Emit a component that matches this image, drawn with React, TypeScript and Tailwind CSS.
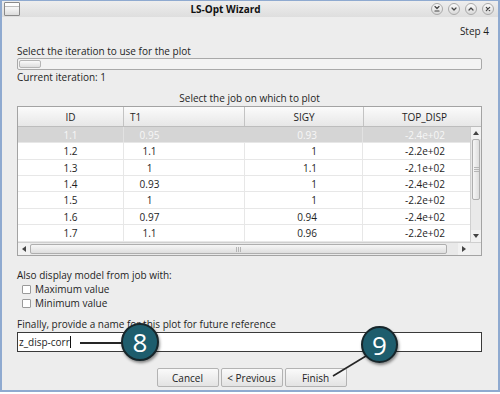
import React from "react";

type Row = { id: string; t1: string; sigy: string; top: string; h: string; sel?: boolean };

const rows: Row[] = [
  { id: "1.1", t1: "0.95", sigy: "0.93", top: "-2.4e+02", h: "h-[16px]", sel: true },
  { id: "1.2", t1: "1.1", sigy: "1", top: "-2.2e+02", h: "h-[17px]" },
  { id: "1.3", t1: "1", sigy: "1.1", top: "-2.1e+02", h: "h-[16px]" },
  { id: "1.4", t1: "0.93", sigy: "1", top: "-2.4e+02", h: "h-[16px]" },
  { id: "1.5", t1: "1", sigy: "1", top: "-2.2e+02", h: "h-[17px]" },
  { id: "1.6", t1: "0.97", sigy: "0.94", top: "-2.4e+02", h: "h-[16px]" },
  { id: "1.7", t1: "1.1", sigy: "0.96", top: "-2.2e+02", h: "h-[17px]" },
];

function TitleBtn({ kind }: { kind: "min" | "down" | "up" | "close" }) {
  return (
    <div className="w-[12px] h-[12px] rounded-full border border-[#a9a9a9] bg-gradient-to-b from-[#fbfbfb] to-[#d9d9d9] flex items-center justify-center">
      <svg width="8" height="8" viewBox="0 0 8 8" fill="none" stroke="#444" strokeWidth="1.2" strokeLinecap="round" strokeLinejoin="round">
        {kind === "min" && (
          <>
            <path d="M2 1.5 L4 3.5 L6 1.5" />
            <path d="M2 6 H6" />
          </>
        )}
        {kind === "down" && <path d="M2 3 L4 5 L6 3" />}
        {kind === "up" && <path d="M2 5 L4 3 L6 5" />}
        {kind === "close" && <path d="M2.3 2.3 L5.7 5.7 M5.7 2.3 L2.3 5.7" />}
      </svg>
    </div>
  );
}

function Checkbox({ label }: { label: string }) {
  return (
    <div className="h-[14px] flex items-center pl-[5px]">
      <div className="w-[9px] h-[9px] border border-[#9a9a9a] bg-white rounded-[1px]" />
      <span className="ml-[4px]">{label}</span>
    </div>
  );
}

function Button({ children }: { children: React.ReactNode }) {
  return (
    <div className="w-[62px] h-[19px] rounded-[2px] border border-[#b3b3b3] bg-gradient-to-b from-[#fafafa] to-[#e3e3e3] flex items-center justify-center text-[#222]">
      {children}
    </div>
  );
}

export default function App() {
  return (
    <div className="w-[500px] h-[394px] relative overflow-hidden bg-white font-['Open_Sans',sans-serif] text-[10px] leading-[14px] text-[#1e1e1e]">
      <div className="w-[500px] h-[392px] bg-[#ededed] border-t border-x-2 border-b-2 border-[#8faad0] flex flex-col">
        {/* Title bar */}
        <div className="h-[16px] flex items-center bg-gradient-to-b from-[#eeeeee] to-[#dedede]">
          <div className="ml-[2px] w-[16px] h-[14px] border border-[#8a8a8a] bg-gradient-to-b from-[#ffffff] via-[#f2f2f2] to-[#dcdcdc] rounded-[1px] flex flex-col">
            <div className="h-[4px] bg-[#fdfdfd] border-b border-[#bdbdbd]" />
          </div>
          <div className="flex-1 text-center font-bold text-[#111]">LS-Opt Wizard</div>
          <div className="flex items-center gap-[5px] mr-[4px]">
            <TitleBtn kind="min" />
            <TitleBtn kind="down" />
            <TitleBtn kind="up" />
            <TitleBtn kind="close" />
          </div>
        </div>

        {/* Body */}
        <div className="flex flex-col pl-[15px] pr-[16px]">
          <div className="mt-[7px] text-right mr-[-7px]">Step 4</div>
          <div className="mt-[6px]">Select the iteration to use for the plot</div>
          <div className="h-[12px] rounded-[2px] border border-[#a9a9a9] bg-[#f3f3f3] flex items-stretch p-[1px]">
            <div className="w-[22px] rounded-[2px] border border-[#b5b5b5] bg-gradient-to-b from-[#fafafa] to-[#dedede]" />
          </div>
          <div>Current iteration: 1</div>
          <div className="mt-[7px] text-center">Select the job on which to plot</div>

          {/* Table */}
          <div className="mt-[1px] h-[150px] border border-[#a3a3a3] bg-white flex flex-col">
            <div className="h-[20px] flex border-b border-[#bdbdbd] bg-gradient-to-b from-[#fbfbfb] to-[#e7e7e7]">
              <div className="w-[106px] border-r border-[#c3c3c3] flex items-center justify-center">ID</div>
              <div className="w-[121px] border-r border-[#c3c3c3] flex items-center pl-[6px]">T1</div>
              <div className="w-[119px] border-r border-[#c3c3c3] flex items-center justify-center">SIGY</div>
              <div className="flex-1 flex items-center justify-center pl-[4px]">TOP_DISP</div>
            </div>
            <div className="flex h-[115px]">
              <div className="flex-1 flex flex-col">
                {rows.map((r) => (
                  <div
                    key={r.id}
                    className={`${r.h} flex items-center border-b border-[#e7e7e7] ${
                      r.sel ? "bg-[#d5d5d5] text-[#f7f7f7]" : "bg-white text-[#1e1e1e]"
                    }`}
                  >
                    <div className={`w-[106px] h-full flex items-center justify-center border-r ${r.sel ? "border-[#e2e2e2]" : "border-[#e7e7e7]"}`}>{r.id}</div>
                    <div className={`w-[121px] h-full flex items-center justify-center pr-[69px] border-r ${r.sel ? "border-[#d5d5d5]" : "border-[#e7e7e7]"}`}>{r.t1}</div>
                    <div className={`w-[118px] h-full flex items-center justify-end pr-[45px] border-r ${r.sel ? "border-[#e2e2e2]" : "border-[#e7e7e7]"}`}>{r.sigy}</div>
                    <div className="flex-1 h-full flex items-center justify-center pl-[17px]">{r.top}</div>
                  </div>
                ))}
              </div>
              {/* vertical scrollbar */}
              <div className="w-[11px] flex flex-col bg-[#e9e9e9] border-l border-[#cfcfcf]">
                <div className="h-[12px] flex items-center justify-center bg-[#f2f2f2]">
                  <svg width="6" height="4" viewBox="0 0 6 4"><path d="M0 4 L3 0 L6 4 Z" fill="#444" /></svg>
                </div>
                <div className="h-[61px] mx-[1px] rounded-[2px] border border-[#aeaeae] bg-gradient-to-r from-[#f6f6f6] to-[#dedede] flex flex-col items-center justify-center gap-[1px]">
                  <div className="w-[5px] h-px bg-[#b5b5b5]" />
                  <div className="w-[5px] h-px bg-[#b5b5b5]" />
                  <div className="w-[5px] h-px bg-[#b5b5b5]" />
                </div>
                <div className="flex-1" />
                <div className="h-[12px] flex items-center justify-center bg-[#f2f2f2]">
                  <svg width="6" height="4" viewBox="0 0 6 4"><path d="M0 0 L3 4 L6 0 Z" fill="#444" /></svg>
                </div>
              </div>
            </div>
            {/* horizontal scrollbar */}
            <div className="h-[13px] flex border-t border-[#cfcfcf] bg-[#e9e9e9]">
              <div className="w-[12px] flex items-center justify-center bg-[#f2f2f2]">
                <svg width="4" height="6" viewBox="0 0 4 6"><path d="M4 0 L0 3 L4 6 Z" fill="#444" /></svg>
              </div>
              <div className="w-[417px] my-[1px] rounded-[2px] border border-[#aeaeae] bg-gradient-to-b from-[#f6f6f6] to-[#dedede] flex items-center justify-center gap-[1px]">
                <div className="w-px h-[5px] bg-[#b5b5b5]" />
                <div className="w-px h-[5px] bg-[#b5b5b5]" />
                <div className="w-px h-[5px] bg-[#b5b5b5]" />
              </div>
              <div className="flex-1" />
              <div className="w-[12px] flex items-center justify-center bg-[#f2f2f2]">
                <svg width="4" height="6" viewBox="0 0 4 6"><path d="M0 0 L4 3 L0 6 Z" fill="#444" /></svg>
              </div>
              <div className="w-[11px] bg-[#ededed]" />
            </div>
          </div>

          <div className="mt-[12px]">Also display model from job with:</div>
          <Checkbox label="Maximum value" />
          <Checkbox label="Minimum value" />
          <div className="mt-[7px]">Finally, provide a name for this plot for future reference</div>
          <div className="mt-[1px] h-[20px] border border-[#3a3a3a] bg-white flex items-center pl-[1px]">
            <span>z_disp-corr</span>
            <span className="w-px h-[12px] bg-[#111]" />
          </div>
          <div className="mt-[16px] flex justify-center gap-[2px] pl-[4px]">
            <Button>Cancel</Button>
            <Button>&lt; Previous</Button>
            <Button>Finish</Button>
          </div>
        </div>
      </div>

      {/* callout lines */}
      <svg className="absolute left-0 top-0 pointer-events-none" width="500" height="394">
        <line x1="80" y1="343" x2="124" y2="343" stroke="#262626" strokeWidth="2" />
        <line x1="366" y1="356" x2="333" y2="376" stroke="#262626" strokeWidth="1.6" />
      </svg>

      {/* callout 8 */}
      <div className="absolute left-[121px] top-[323px] w-[38px] h-[38px] rounded-full bg-[#1e5d6d] border-2 border-[#17262b] shadow-[1px_2px_3px_rgba(0,0,0,0.45)] flex items-center justify-center text-white text-[26px] leading-none font-['Open_Sans',sans-serif]">
        8
      </div>
      {/* callout 9 */}
      <div className="absolute left-[361px] top-[326px] w-[37px] h-[37px] rounded-full bg-[#1e5d6d] border-2 border-[#17262b] shadow-[1px_2px_3px_rgba(0,0,0,0.45)] flex items-center justify-center text-white text-[26px] leading-none font-['Open_Sans',sans-serif]">
        9
      </div>
    </div>
  );
}
